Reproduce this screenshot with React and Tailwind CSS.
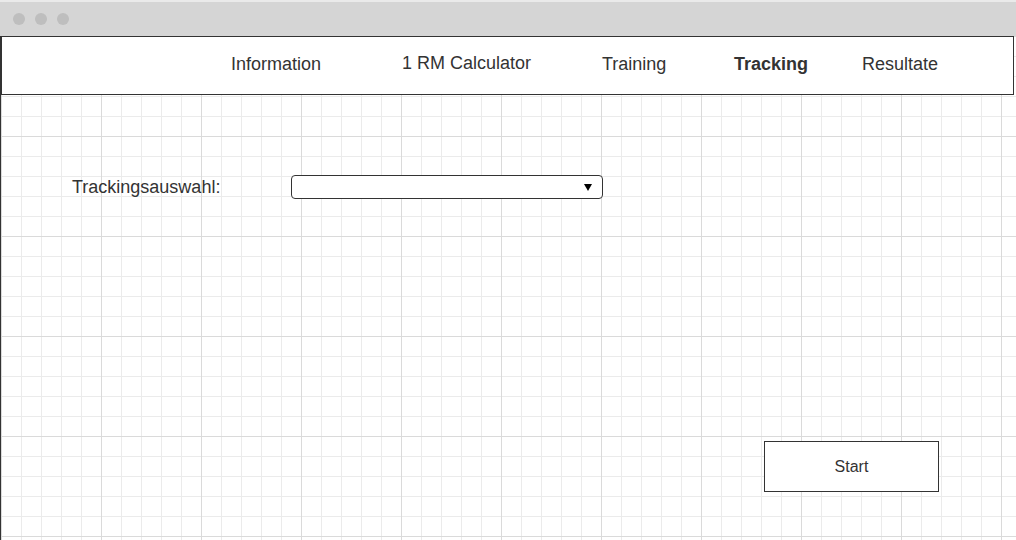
export default function App() {
  return (
    <div
      className="w-[1016px] h-[540px] overflow-hidden bg-white flex flex-col font-['Liberation_Sans',Arial,sans-serif] text-[#333]"
    >
      {/* window chrome */}
      <div className="h-[36px] shrink-0 bg-[#d5d5d5] border-t-2 border-[#eaeaea] flex items-center pl-[13px] gap-[10px]">
        <div className="w-[12px] h-[12px] rounded-full bg-[#bebebe]" />
        <div className="w-[12px] h-[12px] rounded-full bg-[#bebebe]" />
        <div className="w-[12px] h-[12px] rounded-full bg-[#bebebe]" />
      </div>
      {/* body */}
      <div className="flex-1 border-l border-[#333] bg-white [background-image:linear-gradient(to_right,#dadada_1px,transparent_1px),linear-gradient(to_bottom,#dadada_1px,transparent_1px),linear-gradient(to_right,#ebebeb_1px,transparent_1px),linear-gradient(to_bottom,#ebebeb_1px,transparent_1px)] [background-size:100px_100px,100px_100px,20px_20px,20px_20px] flex flex-col">
        {/* nav */}
        <div className="w-[1013px] h-[59px] shrink-0 border border-[#333] bg-white flex items-center pl-[229px] pb-[3px] text-[18px] leading-none">
          <div className="w-[171px]">Information</div>
          <div className="w-[200px] -mt-[2px]">1 RM Calculator</div>
          <div className="w-[132px]">Training</div>
          <div className="w-[128px] font-bold">Tracking</div>
          <div>Resultate</div>
        </div>
        {/* selection row */}
        <div className="mt-[80px] pl-[71px] flex items-center">
          <div className="w-[219px] text-[18px] leading-none">Trackingsauswahl:</div>
          <div className="w-[312px] h-[24px] rounded-[4px] border border-[#333] bg-white flex items-center justify-end pr-[10px]">
            <svg width="8" height="7" viewBox="0 0 8 7">
              <path d="M0 0 L8 0 L4 7 Z" fill="#000" />
            </svg>
          </div>
        </div>
        {/* start button */}
        <div className="mt-[242px] pl-[763px]">
          <div className="w-[175px] h-[51px] border border-[#333] bg-white flex items-center justify-center text-[16px] leading-none">
            Start
          </div>
        </div>
      </div>
    </div>
  );
}
